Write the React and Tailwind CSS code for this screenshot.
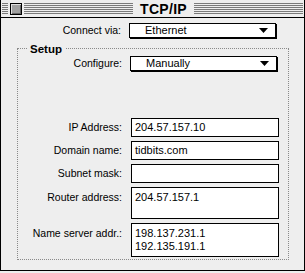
import React from 'react';

const stripes =
  'h-[11px] bg-[repeating-linear-gradient(to_bottom,#7a7a7a_0px,#7a7a7a_1px,transparent_1px,transparent_2px)]';

const Arrow = () => (
  <svg width="9" height="5" viewBox="0 0 9 5" className="block">
    <polygon points="0,0 9,0 4.5,5" fill="#000" />
  </svg>
);

const Popup = ({ value }) => (
  <div className="w-[147px] h-[15px] border border-black bg-white shadow-[1px_1px_0_#000] flex items-center pl-[15px] pr-[7px] text-[11px] text-black">
    <span className="flex-1 leading-none">{value}</span>
    <Arrow />
  </div>
);

const Field = ({ label, lines = [], h = 'h-[19px]', top = false }) => (
  <div className={`flex ${top ? 'items-start' : 'items-center'}`}>
    <div className={`w-[104px] text-right text-[10.5px] leading-[14px] text-black ${top ? 'pt-[3px]' : ''}`}>
      {label}
    </div>
    <div className={`ml-[9px] w-[148px] ${h} border border-black bg-white px-[3px] text-[11px] leading-[13px] text-black ${top ? 'pt-[3px]' : 'pt-[2px]'}`}>
      {lines.map((l, i) => (
        <div key={i}>{l}</div>
      ))}
    </div>
  </div>
);

export default function App() {
  return (
    <div className="w-[305px] h-[273px] bg-[#eeeeee] font-['Liberation_Sans',Arial,sans-serif]">
      <div className="w-[305px] h-[271px] border-x border-b border-black flex flex-col">
        {/* title bar */}
        <div className="h-[18px] border-b border-black flex items-center pl-[1px] pr-[1px] gap-[1px]">
          <div className={`${stripes} w-[6px]`} />
          <div className="w-[12px] h-[12px] border border-black bg-[#a0a0a0] shadow-[inset_1px_1px_0_#e0e0e0,inset_-1px_-1px_0_#666] mx-[1px]" />
          <div className={`${stripes} flex-1`} />
          <div className="px-[6px] text-[14px] font-bold leading-none text-black tracking-[0.3px]">TCP/IP</div>
          <div className={`${stripes} flex-1`} />
        </div>

        {/* connect via */}
        <div className="flex items-center mt-[5px]">
          <div className="w-[120px] text-right text-[10.5px] text-black">Connect via:</div>
          <div className="ml-[8px]">
            <Popup value="Ethernet" />
          </div>
        </div>

        {/* setup group */}
        <fieldset className="mt-[4px] ml-[16px] mr-[15px] border border-dotted border-[#8a8a8a] pb-[2px]">
          <legend className="ml-[9px] px-[3px] text-[11.5px] font-bold leading-[12px] text-black">Setup</legend>
          <div className="flex items-center mt-[1px]">
            <div className="w-[104px] text-right text-[10.5px] text-black">Configure:</div>
            <div className="ml-[8px]">
              <Popup value="Manually" />
            </div>
          </div>
          <div className="flex flex-col gap-[4px] mt-[46px]">
            <Field label="IP Address:" lines={['204.57.157.10']} />
            <Field label="Domain name:" lines={['tidbits.com']} />
            <Field label="Subnet mask:" lines={[]} />
            <Field label="Router address:" lines={['204.57.157.1']} h="h-[32px]" top />
            <Field label="Name server addr.:" lines={['198.137.231.1', '192.135.191.1']} h="h-[34px]" top />
          </div>
        </fieldset>
      </div>
    </div>
  );
}
